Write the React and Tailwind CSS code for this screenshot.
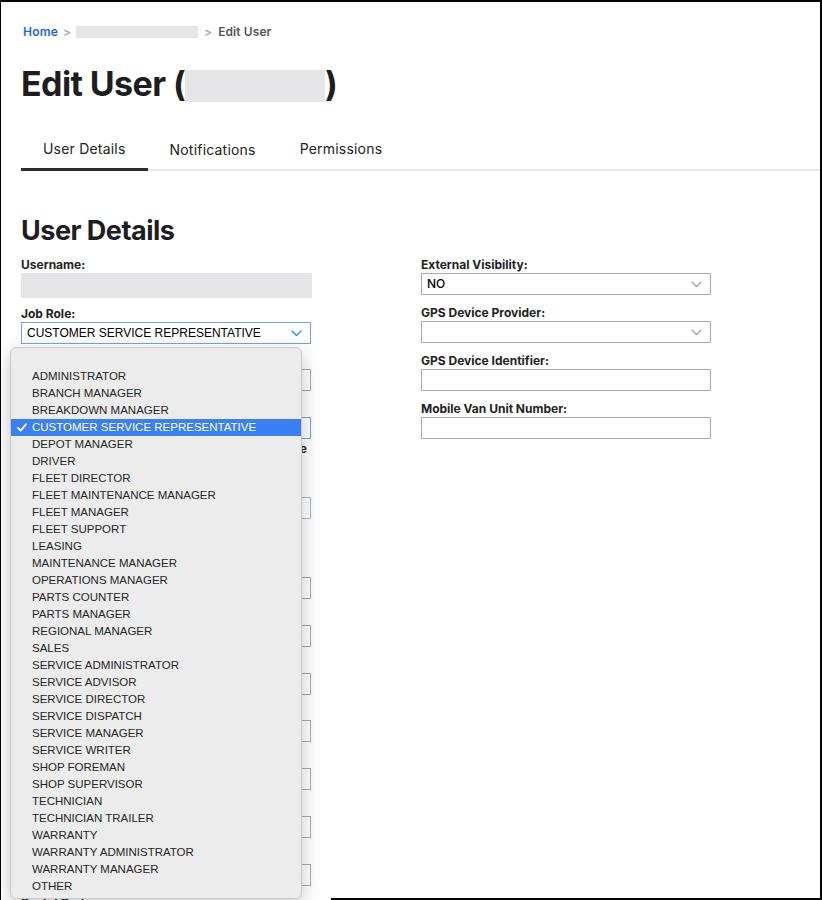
const ROLES = [
  "",
  "ADMINISTRATOR",
  "BRANCH MANAGER",
  "BREAKDOWN MANAGER",
  "CUSTOMER SERVICE REPRESENTATIVE",
  "DEPOT MANAGER",
  "DRIVER",
  "FLEET DIRECTOR",
  "FLEET MAINTENANCE MANAGER",
  "FLEET MANAGER",
  "FLEET SUPPORT",
  "LEASING",
  "MAINTENANCE MANAGER",
  "OPERATIONS MANAGER",
  "PARTS COUNTER",
  "PARTS MANAGER",
  "REGIONAL MANAGER",
  "SALES",
  "SERVICE ADMINISTRATOR",
  "SERVICE ADVISOR",
  "SERVICE DIRECTOR",
  "SERVICE DISPATCH",
  "SERVICE MANAGER",
  "SERVICE WRITER",
  "SHOP FOREMAN",
  "SHOP SUPERVISOR",
  "TECHNICIAN",
  "TECHNICIAN TRAILER",
  "WARRANTY",
  "WARRANTY ADMINISTRATOR",
  "WARRANTY MANAGER",
  "OTHER",
];

const head = "font-['Inter',sans-serif]";
const sys = "font-['Liberation_Sans',Arial,sans-serif]";

const Chevron = ({ color }) => (
  <svg width="11" height="7" viewBox="0 0 11 7" fill="none">
    <path d="M1 1L5.5 5.5L10 1" stroke={color} strokeWidth="1.2" strokeLinecap="round" strokeLinejoin="round" />
  </svg>
);

const Label = ({ children, className = "" }) => (
  <div className={`${head} text-[12px] leading-[14px] font-bold text-[#222] ${className}`}>
    {children}
  </div>
);

const Select = ({ value, focused, headFont }) => (
  <div
    className={`h-[22px] w-[290px] flex items-center justify-between pl-[5px] pr-[8px] bg-white border ${
      focused ? "border-[#6ea4ee]" : "border-[#aaa]"
    }`}
  >
    <span className={`${headFont ? `${head} font-medium` : sys} text-[12px] text-black`}>{value}</span>
    <Chevron color={focused ? "#2f7df0" : "#a0a0a0"} />
  </div>
);

const Input = ({ className = "" }) => (
  <div className={`h-[22px] w-[290px] bg-white border border-[#aaa] ${className}`} />
);

const Field = ({ label, children, className = "" }) => (
  <div className={className}>
    <Label className="mb-[1px]">{label}</Label>
    {children}
  </div>
);

const RoleMenu = () => (
  <div className="absolute left-[9px] top-[345px] w-[292px] h-[552px] rounded-[6px] bg-[#ececec] border border-[#c9c9c9] shadow-[0_6px_20px_rgba(0,0,0,0.22)] pt-[3px] overflow-hidden">
    {ROLES.map((role) => {
      const active = role === "CUSTOMER SERVICE REPRESENTATIVE";
      return (
        <div
          key={role || "blank"}
          className={`relative h-[17px] pl-[21px] flex items-center ${sys} text-[11.5px] ${
            active ? "bg-[#3b7ff5] text-white" : "text-[#262626]"
          }`}
        >
          {active && (
            <svg className="absolute left-[6px] top-[4px]" width="10" height="9" viewBox="0 0 10 9" fill="none">
              <path d="M1 4.8L3.7 7.6L9 1.2" stroke="white" strokeWidth="1.8" strokeLinecap="round" strokeLinejoin="round" />
            </svg>
          )}
          {role}
        </div>
      );
    })}
  </div>
);

export default function App() {
  return (
    <div className="relative w-[822px] h-[900px] overflow-hidden bg-white border-t-2 border-l border-r-2 border-black">
      <div className="pl-[20px]">
        {/* Breadcrumb */}
        <div className={`${head} flex items-center h-[14px] mt-[23px] text-[12px] font-semibold`}>
          <span className="text-[#2563eb] ml-[2px] tracking-[0.2px]">Home</span>
          <span className="text-[#aaa] mx-[5px]">&gt;</span>
          <span className="inline-block w-[122px] h-[12px] bg-[#e5e5e7]" />
          <span className="text-[#aaa] mx-[6px]">&gt;</span>
          <span className="text-[#555] tracking-[0.1px]">Edit User</span>
        </div>

        {/* Title */}
        <h1 className={`${head} mt-[23px] text-[34px] leading-[44px] font-bold text-[#1d1d22] tracking-[-0.6px] flex items-center`}>
          Edit User (
          <span className="inline-block w-[140px] h-[32px] bg-[#e5e5e7] mt-[4px]" />)
        </h1>
      </div>

      {/* Tabs */}
      <div className={`${head} mt-[32px] flex text-[14px] tracking-[0.2px] text-[#222]`}>
        <div className="ml-[20px] px-[22px] pb-[9px] border-b-[3px] border-[#2b2b33]">User Details</div>
        <div className="px-[22px] pb-[9px] border-b-2 border-[#e8e8e8] self-end">Notifications</div>
        <div className="px-[22px] pb-[9px] border-b-2 border-[#e8e8e8] flex-1">Permissions</div>
      </div>

      <div className="pl-[20px]">
        <h2 className={`${head} mt-[44px] text-[27px] leading-[32px] font-bold text-[#1d1d22] tracking-[-0.5px]`}>
          User Details
        </h2>

        <div className="mt-[11px] flex gap-[109px]">
          {/* Left column */}
          <div className="w-[291px] flex flex-col">
            <Field label="Username:">
              <div className="h-[25px] w-[291px] bg-[#e5e5e7]" />
            </Field>
            <Field label="Job Role:" className="mt-[9px]">
              <Select value="CUSTOMER SERVICE REPRESENTATIVE" focused />
            </Field>
            <Field label="First Name:" className="mt-[10px]">
              <Input />
            </Field>
            <Field label="Language:" className="mt-[11px]">
              <div className="h-[22px] w-[290px] bg-white border border-[#6ea4ee]" />
            </Field>
            <Label className="mt-[3px] text-right w-[286px]">Default Timezone Preference</Label>
            <Field label="Email:" className="mt-[26px]">
              <Input className="bg-[#e8f0fe] border-[#aab8d0]" />
            </Field>
            <Field label="Phone Number:" className="mt-[43px]">
              <Input />
            </Field>
            <Field label="Mobile Number:" className="mt-[11px]">
              <Input />
            </Field>
            <Field label="Address Line 1:" className="mt-[11px]">
              <Input />
            </Field>
            <Field label="Address Line 2:" className="mt-[10px]">
              <Input />
            </Field>
            <Field label="City:" className="mt-[11px]">
              <Input />
            </Field>
            <Field label="State:" className="mt-[11px]">
              <Input />
            </Field>
            <Field label="Country:" className="mt-[11px]">
              <Input />
            </Field>
            <Label className="mt-[10px]">Postal Code:</Label>
          </div>

          {/* Right column */}
          <div className="w-[290px] flex flex-col">
            <Field label="External Visibility:">
              <Select value="NO" headFont />
            </Field>
            <Field label="GPS Device Provider:" className="mt-[11px]">
              <Select value="" />
            </Field>
            <Field label="GPS Device Identifier:" className="mt-[11px]">
              <Input />
            </Field>
            <Field label="Mobile Van Unit Number:" className="mt-[11px]">
              <Input />
            </Field>
          </div>
        </div>
      </div>

      <div className="absolute bottom-0 left-[330px] right-0 h-[2px] bg-black" />
      <RoleMenu />
    </div>
  );
}
